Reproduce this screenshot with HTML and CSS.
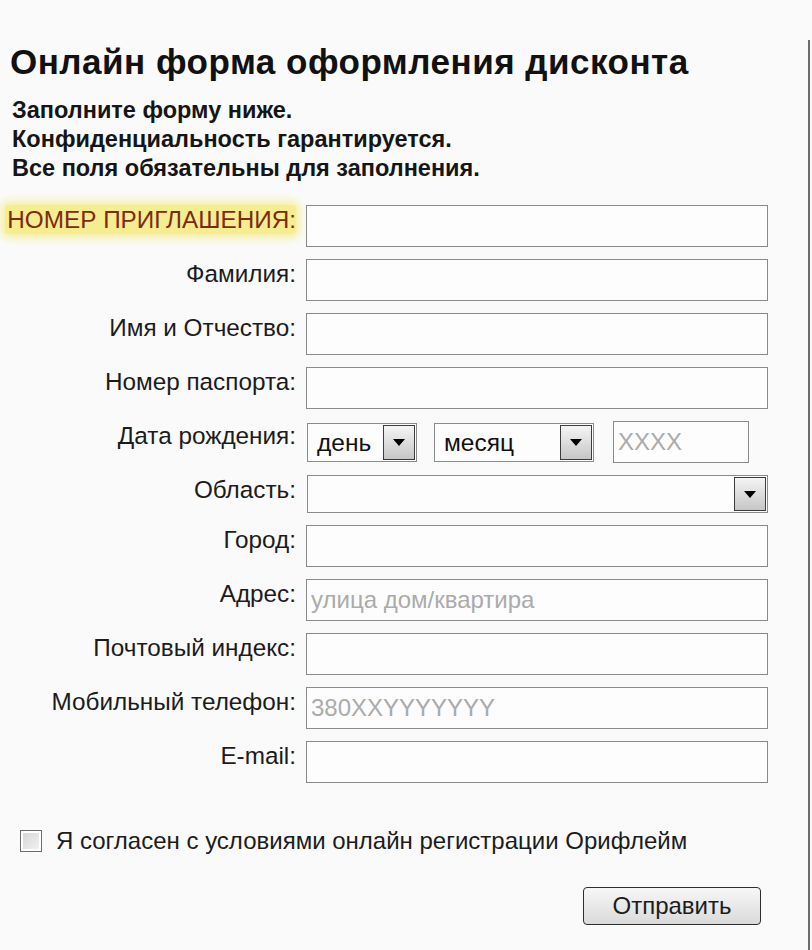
FILE: index.html
```html
<!DOCTYPE html>
<html lang="ru">
<head>
<meta charset="utf-8">
<title>Онлайн форма оформления дисконта</title>
<link rel="stylesheet" href="styles.css">
</head>
<body>
<div class="panel">
  <h1 class="title">Онлайн форма оформления дисконта</h1>
  <div class="intro">
    <p>Заполните форму ниже.</p>
    <p>Конфиденциальность гарантируется.</p>
    <p>Все поля обязательны для заполнения.</p>
  </div>
  <form class="form">
    <div class="row">
      <label class="label"><span class="hl">НОМЕР ПРИГЛАШЕНИЯ:</span></label>
      <input class="field" type="text">
    </div>
    <div class="row">
      <label class="label">Фамилия:</label>
      <input class="field" type="text">
    </div>
    <div class="row">
      <label class="label">Имя и Отчество:</label>
      <input class="field" type="text">
    </div>
    <div class="row">
      <label class="label">Номер паспорта:</label>
      <input class="field" type="text">
    </div>
    <div class="row">
      <label class="label">Дата рождения:</label>
      <div class="date">
        <div class="select select-day"><span class="select-text">день</span><span class="select-btn"><span class="tri"></span></span></div>
        <div class="select select-month"><span class="select-text">месяц</span><span class="select-btn"><span class="tri"></span></span></div>
        <input class="field field-year" type="text" placeholder="XXXX">
      </div>
    </div>
    <div class="row">
      <label class="label label-short">Область:</label>
      <div class="select select-region"><span class="select-text"></span><span class="select-btn"><span class="tri"></span></span></div>
    </div>
    <div class="row">
      <label class="label">Город:</label>
      <input class="field" type="text">
    </div>
    <div class="row">
      <label class="label">Адрес:</label>
      <input class="field" type="text" placeholder="улица дом/квартира">
    </div>
    <div class="row">
      <label class="label">Почтовый индекс:</label>
      <input class="field" type="text">
    </div>
    <div class="row">
      <label class="label">Мобильный телефон:</label>
      <input class="field" type="text" placeholder="380XXYYYYYYY">
    </div>
    <div class="row">
      <label class="label">E-mail:</label>
      <input class="field" type="text">
    </div>
  </form>
  <div class="agree">
    <span class="checkbox"></span>
    <span class="agree-text">Я согласен с условиями онлайн регистрации Орифлейм</span>
  </div>
  <div class="actions">
    <button class="btn" type="button">Отправить</button>
  </div>
</div>
</body>
</html>
```
FILE: styles.css
```css
html, body {
  margin: 0;
  padding: 0;
}
body {
  background: #fafafa;
  font-family: "Liberation Sans", Arial, sans-serif;
  color: #1c1c1c;
}
.panel {
  width: 810px;
  box-sizing: border-box;
  margin-top: 40px;
  min-height: 910px;
  border-right: 2px solid #6e6e6e;
}
.title {
  margin: 0;
  padding: 2px 0 0 10px;
  font-size: 35px;
  line-height: 39px;
  letter-spacing: 0.5px;
  font-weight: bold;
  color: #111;
}
.intro {
  margin-top: 15px;
  padding-left: 12px;
  font-size: 23.5px;
  line-height: 29px;
  font-weight: bold;
  color: #151515;
}
.intro p {
  margin: 0;
}
.form {
  display: flex;
  flex-direction: column;
  gap: 12px;
  margin-top: 22px;
}
.row {
  display: flex;
  align-items: flex-start;
}
.label {
  width: 296px;
  flex: none;
  box-sizing: border-box;
  text-align: right;
  font-size: 24.3px;
  line-height: 28px;
  padding-top: 1px;
  color: #1c1c1c;
}
.hl {
  color: #7a2c12;
  background: #f6ec90;
  box-shadow: 0 0 8px 4px #f7ef9e;
  border-radius: 4px;
  padding: 1px 0 1px 2px;
}
.field {
  display: block;
  width: 462px;
  height: 42px;
  margin: 0 0 0 10px;
  box-sizing: border-box;
  border: 1px solid #8a8a8a;
  background: #fdfdfd;
  font-family: "Liberation Sans", Arial, sans-serif;
  font-size: 24px;
  color: #222;
  padding: 0 4px;
  outline: none;
}
.field::placeholder {
  color: #ababab;
}
.date {
  display: flex;
  align-items: center;
  margin-left: 11px;
  height: 42px;
}
.select {
  display: flex;
  align-items: stretch;
  height: 39px;
  box-sizing: border-box;
  border: 1px solid #8a8a8a;
  background: #fdfdfd;
}
.select-text {
  flex: 1;
  font-size: 24.5px;
  line-height: 37px;
  padding-left: 9px;
  color: #111;
}
.select-btn {
  width: 32px;
  margin: 1px;
  box-sizing: border-box;
  border: 1px solid #3c3c3c;
  background: linear-gradient(#f5f5f5, #c6c6c6);
  display: flex;
  align-items: center;
  justify-content: center;
}
.tri {
  width: 0;
  height: 0;
  border-left: 6px solid transparent;
  border-right: 6px solid transparent;
  border-top: 7px solid #000;
}
.select-day {
  width: 110px;
}
.select-month {
  width: 160px;
  margin-left: 17px;
}
.field-year {
  width: 136px;
  margin-left: 19px;
}
.select-region {
  width: 461px;
  height: 38px;
  margin-left: 11px;
}
.agree {
  display: flex;
  align-items: center;
  margin-top: 44px;
  padding-left: 20px;
}
.checkbox {
  width: 22px;
  height: 22px;
  box-sizing: border-box;
  border: 1px solid #6d6d6d;
  box-shadow: inset 0 0 0 2px #fff;
  background: linear-gradient(135deg, #d4d4d4, #f4f4f4);
}
.agree-text {
  margin-left: 14px;
  font-size: 24px;
  line-height: 28px;
  color: #1c1c1c;
}
.actions {
  display: flex;
  justify-content: flex-end;
  padding-right: 47px;
  margin-top: 32px;
}
.btn {
  width: 178px;
  height: 38px;
  border: 1px solid #2e2e2e;
  border-radius: 4px;
  background: linear-gradient(#f7f7f7, #dadada);
  font-family: "Liberation Sans", Arial, sans-serif;
  font-size: 24px;
  color: #1c1c1c;
  padding: 0;
}
```
